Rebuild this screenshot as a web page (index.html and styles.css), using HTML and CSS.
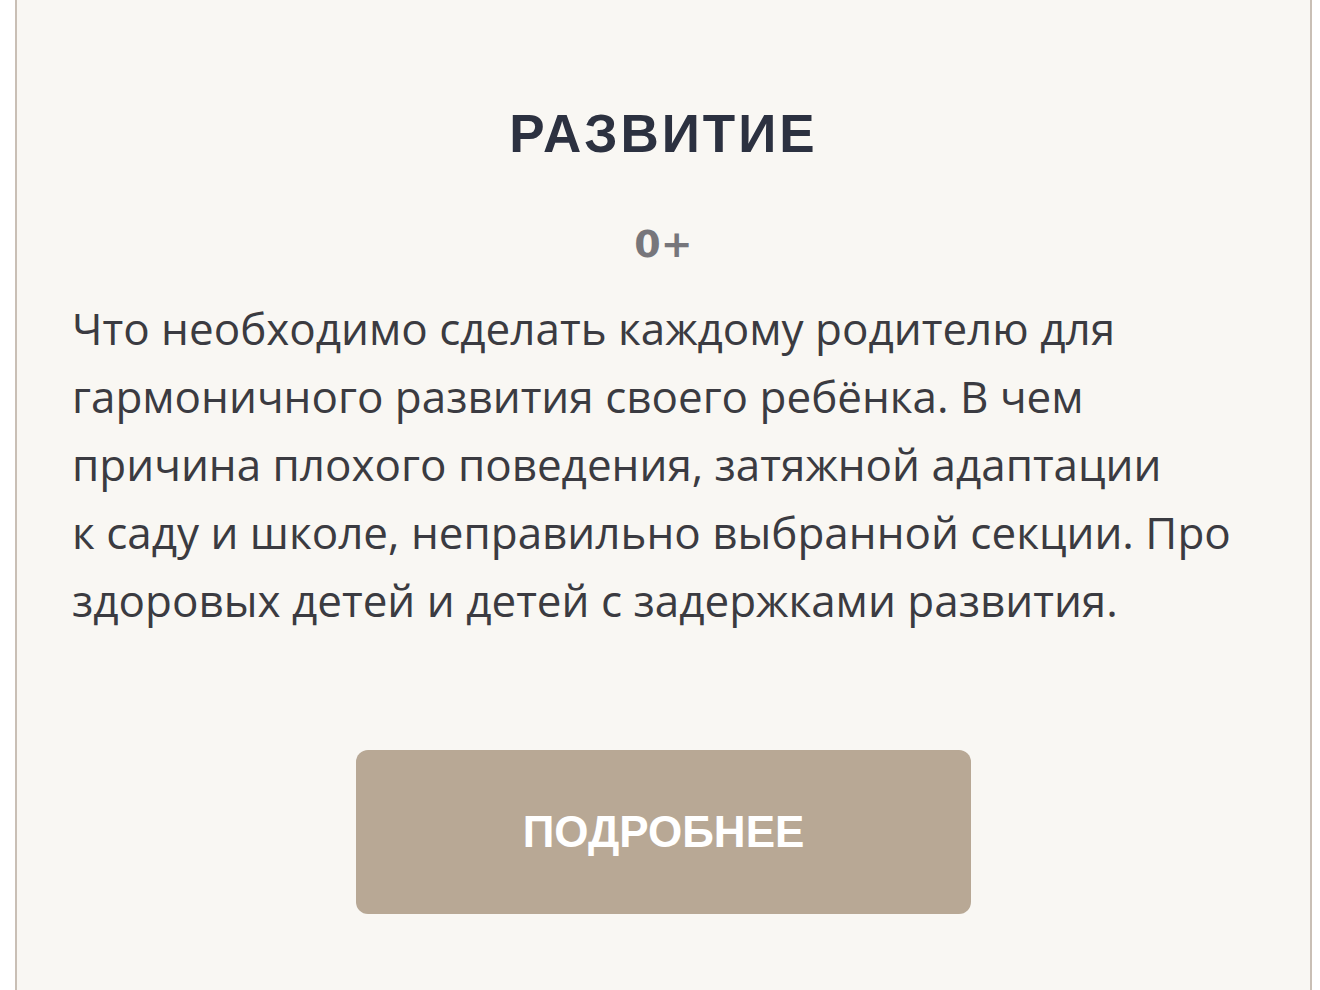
FILE: index.html
```html
<!DOCTYPE html>
<html lang="ru">
<head>
<meta charset="utf-8">
<link rel="stylesheet" href="styles.css">
</head>
<body>
<div class="card">
  <h2 class="title">РАЗВИТИЕ</h2>
  <div class="age">0+</div>
  <p class="text">Что необходимо сделать каждому родителю для гармоничного развития своего ребёнка. В чем причина плохого поведения, затяжной адаптации к&nbsp;саду и школе, неправильно выбранной секции. Про здоровых детей и детей с задержками развития.</p>
  <div class="actions">
    <a class="btn">ПОДРОБНЕЕ</a>
  </div>
</div>
</body>
</html>
```
FILE: styles.css
```css
html, body {
  margin: 0;
  padding: 0;
  background: #ffffff;
  height: 990px;
  overflow: hidden;
}
.card {
  box-sizing: border-box;
  margin: 0 8px 0 15px;
  height: 990px;
  background: #f9f7f3;
  border-left: 2px solid #c9bfb5;
  border-right: 2px solid #c9bfb5;
  padding: 104px 55px 0 55px;
  font-family: "Open Sans", "Noto Sans", sans-serif;
}
.title {
  margin: 0;
  text-align: center;
  font-family: "Liberation Sans", sans-serif;
  font-weight: 700;
  font-size: 53px;
  line-height: 60px;
  letter-spacing: 3px;
  color: #2c3140;
}
.age {
  margin-top: 60px;
  text-align: center;
  font-family: "DejaVu Sans", sans-serif;
  font-weight: 700;
  font-size: 38px;
  line-height: 40px;
  color: #77767b;
}
.text {
  margin: 30px 0 0 0;
  font-size: 44px;
  line-height: 68px;
  color: #3b3b41;
}
.actions {
  margin-top: 116px;
  display: flex;
  justify-content: center;
}
.btn {
  display: flex;
  align-items: center;
  justify-content: center;
  width: 615px;
  height: 164px;
  border-radius: 12px;
  background: #b8a895;
  color: #ffffff;
  font-family: "Liberation Sans", sans-serif;
  font-weight: 700;
  font-size: 44px;
}
```
